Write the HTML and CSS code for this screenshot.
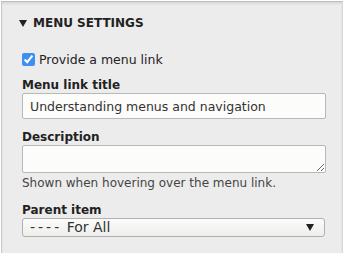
FILE: index.html
```html
<!DOCTYPE html>
<html lang="en">
<head>
    <meta charset="UTF-8">
    <meta name="viewport" content="width=device-width, initial-scale=1.0">
    <title>Menu settings</title>
    <link rel="stylesheet" href="styles.css">
</head>
<body>
    <div class="panel">
        <div class="summary"><span class="arrow"></span>Menu settings</div>
        <div class="body">
            <label class="check">
                <input type="checkbox" checked>
                <span>Provide a menu link</span>
            </label>

            <div class="field">
                <label class="label" for="title">Menu link title</label>
                <input type="text" id="title" class="text" value="Understanding menus and navigation">
            </div>

            <div class="field">
                <label class="label" for="desc">Description</label>
                <textarea id="desc" class="area" rows="1"></textarea>
                <div class="help">Shown when hovering over the menu link.</div>
            </div>

            <div class="field parent">
                <label class="label" for="parent">Parent item</label>
                <div class="select" id="parent">
                    <span><span class="dashes">----</span> For All</span>
                    <span class="caret"></span>
                </div>
            </div>
        </div>
    </div>
</body>
</html>
```

FILE: styles.css
```css
body {
    margin: 0;
    padding: 0;
    background-color: #ffffff;
    font-family: "DejaVu Sans", Verdana, sans-serif;
    color: #333;
}
.panel {
    margin: 1px 2px 0 1px;
    height: 252px;
    box-sizing: border-box;
    background-color: #ececec;
    border-left: 1px solid #c9c9c9;
    border-right: 1px solid #d6d6d6;
    border-top: 1px solid #bdbdbd;
    box-shadow: inset 0 2px 2px rgba(0, 0, 0, 0.08);
}
.summary {
    display: flex;
    align-items: center;
    padding: 14px 0 0 17px;
    height: 14px;
    font-size: 12px;
    line-height: 14px;
    font-weight: bold;
    text-transform: uppercase;
    color: #222;
}
.arrow {
    width: 0;
    height: 0;
    border-left: 4px solid transparent;
    border-right: 4px solid transparent;
    border-top: 7px solid #222;
    margin-right: 6px;
}
.body {
    padding: 0 16px 0 20px;
}
.check {
    display: flex;
    align-items: center;
    margin-top: 21px;
    height: 16px;
    font-size: 12.5px;
    color: #222;
}
.check input {
    margin: 0 4px 0 0;
    width: 13px;
    height: 13px;
    accent-color: #3d8ff2;
}
.field {
    margin-top: 11px;
}
.label {
    display: block;
    font-size: 12px;
    line-height: 14px;
    font-weight: bold;
    color: #222;
    margin-bottom: 1px;
}
.text, .area {
    display: block;
    box-sizing: border-box;
    width: 304px;
    margin: 0;
    border: 1px solid #b8b8b8;
    border-radius: 2px;
    background-color: #fcfcfa;
    font-family: "DejaVu Sans", Verdana, sans-serif;
    font-size: 12.5px;
    color: #333;
}
.text {
    height: 26px;
    padding: 0 7px;
}
.area {
    height: 28px;
    resize: vertical;
}
.help {
    margin-top: 3px;
    font-size: 12px;
    line-height: 15px;
    color: #444;
}
.parent {
    margin-top: 12px;
}
.select {
    box-sizing: border-box;
    width: 303px;
    height: 19px;
    display: flex;
    align-items: center;
    justify-content: space-between;
    padding: 0 10px 0 7px;
    border: 1px solid #b0b0b0;
    border-radius: 3px;
    background: linear-gradient(#fbfbf9, #eeeeec);
    font-size: 14px;
    line-height: 17px;
    color: #333;
}
.dashes {
    letter-spacing: 3px;
}
.caret {
    width: 0;
    height: 0;
    border-left: 4px solid transparent;
    border-right: 4px solid transparent;
    border-top: 7px solid #222;
}
```
